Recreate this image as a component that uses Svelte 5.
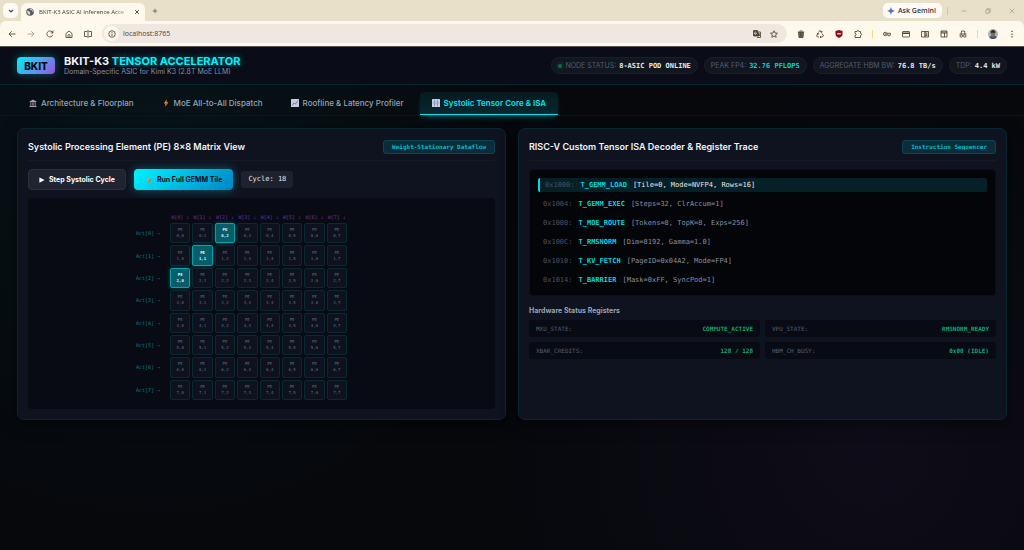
<script lang="ts">
  type Stat = { label: string; value: string; dot?: boolean; accent?: boolean }

  const stats: Stat[] = [
    { label: 'NODE STATUS:', value: '8-ASIC POD ONLINE', dot: true },
    { label: 'PEAK FP4:', value: '32.76 PFLOPS', accent: true },
    { label: 'AGGREGATE HBM BW:', value: '76.8 TB/s' },
    { label: 'TDP:', value: '4.4 kW' }
  ]

  const tabs = [
    { icon: 'bank', label: 'Architecture & Floorplan' },
    { icon: 'bolt', label: 'MoE All-to-All Dispatch' },
    { icon: 'chart', label: 'Roofline & Latency Profiler' },
    { icon: 'grid', label: 'Systolic Tensor Core & ISA' }
  ]

  const isa = [
    { addr: '0x1000:', op: 'T_GEMM_LOAD', args: '[Tile=0, Mode=NVFP4, Rows=16]' },
    { addr: '0x1004:', op: 'T_GEMM_EXEC', args: '[Steps=32, ClrAccum=1]' },
    { addr: '0x1008:', op: 'T_MOE_ROUTE', args: '[Tokens=8, TopK=8, Exps=256]' },
    { addr: '0x100C:', op: 'T_RMSNORM', args: '[Dim=8192, Gamma=1.0]' },
    { addr: '0x1010:', op: 'T_KV_FETCH', args: '[PageID=0x04A2, Mode=FP4]' },
    { addr: '0x1014:', op: 'T_BARRIER', args: '[Mask=0xFF, SyncPod=1]' }
  ]

  const registers = [
    { name: 'MXU_STATE:', value: 'COMPUTE_ACTIVE' },
    { name: 'VPU_STATE:', value: 'RMSNORM_READY' },
    { name: 'XBAR_CREDITS:', value: '128 / 128' },
    { name: 'HBM_CH_BUSY:', value: '0x00 (IDLE)' }
  ]

  const lanes = [0, 1, 2, 3, 4, 5, 6, 7]

  let activeTab = $state(3)
  let cycle = $state(18)
  let url = $state('localhost:8765')

  // the wavefront moves one diagonal per cycle
  let diagonal = $derived(cycle % 16)
  let pc = $derived(cycle % isa.length)
</script>

{#snippet bolt()}
  <svg class="emoji" viewBox="0 0 16 16" aria-hidden="true">
    <path d="M9.5 0.5 4 9h3.6L6 15.5 12.5 6.5H8.8z" fill="#f7a03c" />
    <path d="M7.6 9 6 15.5 12.5 6.5 8.8 6.5z" fill="#e0562b" />
  </svg>
{/snippet}

<div class="chrome">
  <div class="tabstrip">
    <button class="tab-search" aria-label="Search tabs">
      <svg viewBox="0 0 16 16"><path d="M4 6l4 4 4-4" stroke-width="2.4" /></svg>
    </button>
    <div class="browser-tab">
      <svg class="globe" viewBox="0 0 16 16">
        <circle cx="8" cy="8" r="7.5" fill="#50555c" stroke="none" />
        <path d="M2 6c3-1 4 1 6 2s0 4-1 6C4 13 2 10 2 6zM8 1.500c-1 2 1 3 3 3s1 3 3 4c1-3-1-7-6-7z" fill="#d5d6d3" stroke="none" />
      </svg>
      <span class="title">BKIT-K3 ASIC AI Inference Acce</span>
      <button class="bare" aria-label="Close tab">
        <svg viewBox="0 0 16 16"><path d="M3 3l10 10M13 3L3 13" stroke-width="2.6" /></svg>
      </button>
    </div>
    <button class="bare new-tab" aria-label="New tab">
      <svg viewBox="0 0 16 16"><path d="M8 2v12M2 8h12" stroke-width="1.8" /></svg>
    </button>
    <button class="gemini">
      <svg viewBox="0 0 16 16">
        <path d="M8 0C8.600 5 11 7.400 16 8H0C5 7.400 7.400 5 8 0z" fill="#e8523f" stroke="none" />
        <path d="M8 0C7.400 5 5 7.400 0 8c5 .6 7.400 3 8 8z" fill="#35a853" stroke="none" />
        <path d="M8 2c.6 3.500 3 5.400 8 6-5 .6-7.400 3-8 8-.6-4-2-6-4-8 2-1 3.500-3 4-6z" fill="#3b78f0" stroke="none" />
      </svg>
      Ask Gemini
    </button>
    <span class="rule"></span>
    <div class="window-buttons">
      <button class="bare" aria-label="Minimize"><svg viewBox="0 0 16 16"><path d="M2 8h12" /></svg></button>
      <button class="bare" aria-label="Restore">
        <svg viewBox="0 0 16 16"><rect x="2" y="5" width="9" height="9" rx="1" /><path d="M5 5V2h9v9h-3" /></svg>
      </button>
      <button class="bare" aria-label="Close"><svg viewBox="0 0 16 16"><path d="M2 2l12 12M14 2L2 14" /></svg></button>
    </div>
  </div>

  <div class="toolbar">
    <div class="nav">
      <button class="bare" aria-label="Back"><svg viewBox="0 0 16 16"><path d="M15 8H2M7.500 2.500L2 8l5.500 5.500" /></svg></button>
      <button class="bare off" aria-label="Forward"><svg viewBox="0 0 16 16"><path d="M1 8h13M8.500 2.500L14 8l-5.500 5.500" /></svg></button>
      <button class="bare" aria-label="Reload">
        <svg viewBox="0 0 16 16"><path d="M13.500 9.500A6 6 0 1 1 12 3.700L14 5.500M14 1v4.800H9.500" /></svg>
      </button>
      <button class="bare" aria-label="Home">
        <svg viewBox="0 0 16 16"><path d="M2 7l6-5 6 5v8H2zM6 15v-4a2 2 0 0 1 4 0v4" /></svg>
      </button>
      <button class="bare" aria-label="Split view">
        <svg viewBox="0 0 16 16"><path d="M6.500 3H1v10h5.500M9.500 3H15v10H9.500M8 0v16" /></svg>
      </button>
    </div>
    <div class="omnibox">
      <button class="site-info" aria-label="Site information">
        <svg viewBox="0 0 16 16"><circle cx="8" cy="8" r="6.500" /><path d="M8 7v5M8 4v1.500" /></svg>
      </button>
      <input type="text" aria-label="Address" bind:value={url} />
      <button class="bare" aria-label="Translate">
        <svg viewBox="0 0 16 16">
          <path d="M1 1h8l3 11H1z" fill="#4c4632" /><path d="M10 4h5v11H8M10 8h4M12 7v1c0 2-1 3-2 4M11 9l3 3" />
          <path d="M6.500 5a2 2 0 1 0 .5 2H5" stroke="#efe6dd" />
        </svg>
      </button>
      <button class="bare" aria-label="Bookmark">
        <svg viewBox="0 0 16 16"><path d="M8 1.500l2 4.600 5 .4-3.800 3.300 1.200 4.900L8 12l-4.400 2.700 1.200-4.900L1 6.500l5-.4z" /></svg>
      </button>
    </div>
    <div class="extensions">
      <button class="bare" aria-label="Cleaner">
        <svg viewBox="0 0 16 16"><path d="M3 5h10l-1 10H4z" fill="#6f7278" /><path d="M1.500 4h13M5 2h6M6.500 6v8M9.500 6v8" /></svg>
      </button>
      <button class="bare" aria-label="Recycle">
        <svg viewBox="0 0 16 16"><path d="M5 5l3-4 3 4M12 7l3 5-3 2H9M6 14H3l-2-2 3-5M9 4h3V2M10 12l-2 2 2 2M2 7h3v2" /></svg>
      </button>
      <button class="bare" aria-label="Content blocker">
        <svg viewBox="0 0 16 16">
          <path d="M8 0l7 2v6c0 4-3 6-7 8-4-2-7-4-7-8V2z" fill="#8c0d12" stroke="none" />
          <path d="M4.500 7.500h7" stroke="#fff" stroke-width="2.500" />
        </svg>
      </button>
      <button class="bare" aria-label="Extensions">
        <svg viewBox="0 0 16 16"><path d="M2 3h4a2 2 0 0 1 4 0h3v4a2 2 0 0 1 0 4v4H2v-4a2 2 0 0 0 0-4z" /></svg>
      </button>
    </div>
    <span class="rule yellow"></span>
    <div class="panels">
      <button class="bare" aria-label="Passwords">
        <svg viewBox="0 0 16 16"><circle cx="4.500" cy="8" r="3.500" /><circle cx="4.500" cy="8" r=".8" /><path d="M8 6.500h7v3h-1.500v2h-3V9.500H8" /></svg>
      </button>
      <button class="bare" aria-label="Payment methods">
        <svg viewBox="0 0 16 16"><rect x="1" y="3" width="14" height="11" rx="1" /><path d="M1 6.500h14" stroke-width="3" /></svg>
      </button>
      <button class="bare" aria-label="Reading list">
        <svg viewBox="0 0 16 16"><path d="M8 3H1v11h7zM8 3h7v11H8zM10 6h3M10 8.500h3M10 11h3" /></svg>
      </button>
      <button class="bare" aria-label="Layout">
        <svg viewBox="0 0 16 16"><path d="M2 2h12v12H2zM2 6h12M9 6v8M2 4h12" /></svg>
      </button>
      <button class="bare" aria-label="Incognito tools">
        <svg viewBox="0 0 16 16"><path d="M1 8h14M4 8l1-6h6l1 6" /><circle cx="4.500" cy="12" r="2.500" /><circle cx="11.500" cy="12" r="2.500" /></svg>
      </button>
    </div>
    <span class="rule yellow"></span>
    <button class="avatar" aria-label="Profile">
      <svg viewBox="0 0 16 16">
        <circle cx="8" cy="8" r="8" fill="#a9b4b8" stroke="none" />
        <path d="M2 13c2-3 10-3 12 0-3 4-9 4-12 0z" fill="#3f5a74" stroke="none" />
        <ellipse cx="8" cy="7.500" rx="3.500" ry="4.500" fill="#8e6a55" stroke="none" />
        <path d="M4 6c0-6 8-6 8 0z" fill="#2b2624" stroke="none" />
      </svg>
    </button>
    <button class="bare" aria-label="Menu">
      <svg viewBox="0 0 16 16"><path d="M8 1.500v2.500M8 7v2.500M8 12.500v2.500" stroke-width="2.500" /></svg>
    </button>
  </div>
</div>

<div class="app">
  <header>
    <div class="logo">BKIT</div>
    <div class="brand">
      <h1>BKIT-K3 <span>TENSOR ACCELERATOR</span></h1>
      <p>Domain-Specific ASIC for Kimi K3 (2.8T MoE LLM)</p>
    </div>
    <div class="stats">
      {#each stats as stat}
        <div class="pill">
          {#if stat.dot}<i class="dot"></i>{/if}
          <span>{stat.label}</span>
          <strong class:accent={stat.accent}>{stat.value}</strong>
        </div>
      {/each}
    </div>
  </header>

  <nav class="tabs">
    {#each tabs as tab, i}
      <button class:active={activeTab === i} onclick={() => (activeTab = i)}>
        {#if tab.icon === 'bolt'}
          {@render bolt()}
        {:else}
          <svg class="emoji" viewBox="0 0 16 16" aria-hidden="true">
            {#if tab.icon === 'bank'}
              <path d="M8 1L15 5v1.500H1V5zM1 13.500h14V16H1z" fill="#aa9cac" />
              <path d="M2.500 7h2v6h-2zM5.800 7h1.700v6H5.800zM8.600 7h1.700v6H8.600zM11.500 7h2v6h-2z" fill="#8c7f92" />
            {:else if tab.icon === 'chart'}
              <rect width="16" height="16" rx="1" fill="#d5cbe0" />
              <path d="M1 6h14M1 10h14M5 1v14M10 1v14" stroke="#b5abc8" stroke-width=".6" />
              <path d="M2 13l4-5 3 2 5-7" fill="none" stroke="#3d84cd" stroke-width="1.800" />
            {:else}
              <rect width="16" height="16" rx="1" fill="#d3cfe6" />
              <path d="M5 1v14M11 1v14M1 8h14" stroke="#6f96d2" stroke-width="1.500" />
              <path d="M3.500 4.500h3M9.500 4.500h3M3.500 11.500h3M9.500 11.500h3" stroke="#7d8cc4" stroke-width="1.500" />
            {/if}
          </svg>
        {/if}
        {tab.label}
      </button>
    {/each}
  </nav>

  <main>
    <section class="card">
      <div class="card-head">
        <h2>Systolic Processing Element (PE) 8×8 Matrix View</h2>
        <span class="badge">Weight-Stationary Dataflow</span>
      </div>
      <div class="controls">
        <button class="step" onclick={() => (cycle += 1)}>
          <svg viewBox="0 0 16 16" aria-hidden="true"><path d="M1 1l14 7-14 7z" fill="#fff" /></svg>
          Step Systolic Cycle
        </button>
        <button class="run" onclick={() => (cycle += 16)}>
          {@render bolt()}
          Run Full GEMM Tile
        </button>
        <span class="cycle">Cycle: {cycle}</span>
      </div>
      <div class="matrix">
        <div class="pe-grid">
          <span></span>
          {#each lanes as c}
            <span class="weight">W[{c}] ↓</span>
          {/each}
          {#each lanes as r}
            <span class="act">Act[{r}] →</span>
            {#each lanes as c}
              <div class="pe" class:hot={r + c === diagonal}>
                <span>PE</span>
                <span>{r},{c}</span>
              </div>
            {/each}
          {/each}
        </div>
      </div>
    </section>

    <section class="card">
      <div class="card-head">
        <h2>RISC-V Custom Tensor ISA Decoder &amp; Register Trace</h2>
        <span class="badge">Instruction Sequencer</span>
      </div>
      <div class="trace">
        {#each isa as line, i}
          <div class="line" class:current={i === pc}>
            <span class="addr">{line.addr}</span>
            <span class="op">{line.op}</span>
            <span>{line.args}</span>
          </div>
        {/each}
      </div>
      <h3>Hardware Status Registers</h3>
      <div class="registers">
        {#each registers as reg}
          <div class="register">
            <span>{reg.name}</span>
            <strong>{reg.value}</strong>
          </div>
        {/each}
      </div>
    </section>
  </main>
</div>

<style>
  :global(body) {
    margin: 0;
    background: #05070b;
  }

  :global(#app) {
    display: flex;
    flex-direction: column;
    min-height: 100vh;
  }

  * {
    box-sizing: border-box;
  }

  button {
    font: inherit;
    margin: 0;
    cursor: pointer;
  }

  /* browser frame */
  .chrome {
    font-family: 'Open Sans', 'Noto Sans', sans-serif;
    color: #3c3828;
    background: #e8e0c8;
  }

  .chrome svg {
    display: block;
    width: 8px;
    height: 8px;
    fill: none;
    stroke: #4c4632;
    stroke-width: 1.7;
  }

  .chrome .bare {
    padding: 0;
    border: 0;
    background: none;
  }

  .tabstrip {
    display: flex;
    align-items: center;
    height: 21px;
    padding-left: 3px;
  }

  .tab-search {
    display: grid;
    place-items: center;
    width: 15px;
    height: 15px;
    padding: 0;
    border: 0;
    border-radius: 5px;
    background: #fffaf8;
  }

  .browser-tab {
    display: flex;
    align-items: center;
    gap: 5px;
    align-self: flex-end;
    width: 124px;
    height: 18px;
    margin-left: 3px;
    padding: 0 5px;
    border-radius: 6px 6px 0 0;
    background: #fff8ec;
    font-size: 6px;
  }

  .browser-tab .title {
    flex: 1;
    overflow: hidden;
    white-space: nowrap;
    mask-image: linear-gradient(90deg, #000 85%, transparent);
  }

  .browser-tab .bare svg,
  .new-tab svg {
    width: 6px;
    height: 6px;
  }

  .new-tab {
    margin-left: 7px;
  }

  .gemini {
    display: flex;
    align-items: center;
    gap: 3px;
    height: 15px;
    margin-left: auto;
    padding: 0 6px 0 4px;
    border: 0;
    border-radius: 5px;
    background: #fffaf8;
    color: #333;
    font-size: 7px;
    font-weight: 600;
  }

  .rule {
    width: 1px;
    height: 8px;
    margin-left: 5px;
    background: #ccc4ae;
  }

  .rule.yellow {
    margin: 0 10px;
    background: #f6dc76;
  }

  .window-buttons {
    display: flex;
    gap: 18px;
    padding: 0 9px 0 13px;
  }

  .window-buttons svg {
    width: 6px;
    height: 6px;
    stroke: #9b947f;
  }

  .toolbar {
    display: flex;
    align-items: center;
    height: 26px;
    padding: 0 8px;
    border-bottom: 1px solid #56554f;
    border-radius: 6px 6px 0 0;
    background: #fff8ec;
  }

  .nav {
    display: flex;
    gap: 11px;
  }

  .nav .off {
    opacity: 0.5;
  }

  .omnibox {
    display: flex;
    flex: 1;
    align-items: center;
    gap: 9px;
    height: 19px;
    margin: 0 10px;
    padding: 0 9px 0 2px;
    border-radius: 10px;
    background: #efe7e1;
  }

  .site-info {
    display: grid;
    place-items: center;
    width: 15px;
    height: 15px;
    padding: 0;
    border: 0;
    border-radius: 50%;
    background: #fff8ec;
  }

  .omnibox input {
    flex: 1;
    min-width: 0;
    margin-left: -5px;
    padding: 0;
    border: 0;
    outline: 0;
    background: none;
    color: #4a463c;
    font-family: inherit;
    font-size: 7px;
  }

  .extensions,
  .panels {
    display: flex;
    gap: 11px;
  }

  .avatar {
    margin-right: 10px;
    padding: 0;
    border: 0;
    background: none;
  }

  .avatar svg {
    width: 10px;
    height: 10px;
  }

  /* page */
  .app {
    flex: 1;
    font-family: Inter, sans-serif;
    color: #f1f5f9;
    background:
      radial-gradient(circle at 15% 20%, rgba(0, 242, 254, 0.05), transparent 40%),
      radial-gradient(circle at 85% 80%, rgba(155, 81, 224, 0.06), transparent 40%),
      #06080c;
  }

  header {
    display: flex;
    align-items: center;
    gap: 9px;
    height: 38px;
    padding: 0 17px;
    border-bottom: 1px solid #082630;
    background: #0a0d17;
  }

  .logo {
    display: grid;
    place-items: center;
    width: 38px;
    height: 17px;
    border-radius: 4px;
    background: linear-gradient(135deg, #00f2fe, #9b51e0);
    box-shadow: 0 0 8px rgba(0, 242, 254, 0.35);
    color: #05070b;
    font-size: 10px;
    font-weight: 800;
  }

  h1,
  h2,
  h3,
  p {
    margin: 0;
  }

  h1 {
    font-size: 11px;
    font-weight: 700;
    line-height: 13px;
  }

  h1 span {
    color: #00f2fe;
    text-shadow: 0 0 6px rgba(0, 242, 254, 0.5);
  }

  .brand p {
    color: #8290a5;
    font-size: 7px;
    line-height: 8px;
  }

  .stats {
    display: flex;
    gap: 6px;
    margin-left: auto;
  }

  .pill {
    display: flex;
    align-items: center;
    gap: 3px;
    height: 17px;
    padding: 0 6px;
    border: 1px solid #1b1f29;
    border-radius: 9px;
    background: #12161f;
    color: #505e73;
    font-size: 7px;
    white-space: nowrap;
  }

  .pill strong {
    color: #e2e8f0;
    font-family: 'DejaVu Sans Mono', monospace;
  }

  .pill strong.accent {
    color: #00d0dc;
  }

  .dot {
    width: 4px;
    height: 4px;
    border-radius: 50%;
    background: #0b6b4c;
    box-shadow: 0 0 4px #0b6b4c;
  }

  .tabs {
    display: flex;
    gap: 4px;
    padding: 7px 17px 0;
    border-bottom: 1px solid #10141b;
  }

  .tabs button {
    display: flex;
    align-items: center;
    gap: 4px;
    height: 23px;
    padding: 0 12px;
    border: 0;
    border-bottom: 1px solid transparent;
    border-radius: 4px 4px 0 0;
    background: none;
    color: #94a3b8;
    font-size: 8px;
    font-weight: 500;
  }

  .tabs button.active {
    border-color: #00e2ee;
    background: linear-gradient(180deg, #07191f, #06282f);
    box-shadow: 0 4px 6px -3px rgba(0, 242, 254, 0.4);
    color: #00e2ee;
    font-weight: 600;
  }

  .emoji {
    width: 8px;
    height: 8px;
  }

  main {
    display: grid;
    grid-template-columns: 1fr 1fr;
    gap: 12px;
    padding: 12px 17px;
  }

  .card {
    padding: 10px;
    border: 1px solid #092731;
    border-radius: 7px;
    background: #0f131f;
    box-shadow: 0 4px 16px rgba(0, 0, 0, 0.5);
  }

  .card-head {
    display: flex;
    align-items: center;
    justify-content: space-between;
    height: 22px;
    padding-bottom: 6px;
    border-bottom: 1px solid #151a25;
  }

  h2 {
    font-size: 9px;
    font-weight: 600;
  }

  .badge {
    padding: 0 8px;
    border: 1px solid #0a4752;
    border-radius: 3px;
    background: #0b2c38;
    color: #00bcc9;
    font-family: 'DejaVu Sans Mono', monospace;
    font-size: 6px;
    font-weight: 700;
    line-height: 12px;
  }

  .controls {
    display: flex;
    align-items: center;
    gap: 8px;
    margin: 8px 0;
  }

  .controls button {
    display: flex;
    align-items: center;
    gap: 4px;
    height: 21px;
    padding: 0 10px;
    border-radius: 4px;
    font-size: 7px;
    font-weight: 700;
  }

  .step {
    border: 1px solid #2b303a;
    background: #1f2430;
    color: #fff;
  }

  .step svg {
    width: 6px;
    height: 6px;
  }

  .controls .run {
    padding: 0 11px;
    border: 0;
    background: linear-gradient(135deg, #00f2fe, #0284c7);
    box-shadow: 0 0 8px rgba(0, 242, 254, 0.35);
    color: #05121c;
  }

  .cycle {
    padding: 0 7px;
    border-radius: 3px;
    background: #1e222d;
    color: #e2e8f0;
    font-family: 'DejaVu Sans Mono', monospace;
    font-size: 7px;
    line-height: 17px;
  }

  .matrix {
    display: flex;
    justify-content: center;
    padding: 15px 0 9px;
    border-radius: 4px;
    background: #080b13;
  }

  .pe-grid {
    display: grid;
    grid-template-columns: 32px repeat(8, 1fr);
    gap: 2px;
    width: 211px;
    margin-right: 40px;
    font-family: 'DejaVu Sans Mono', monospace;
    font-size: 5px;
    line-height: 8px;
  }

  .weight {
    color: #4f2580;
    font-weight: 700;
    text-align: center;
    white-space: nowrap;
  }

  .act {
    align-self: center;
    color: #05808b;
    white-space: nowrap;
  }

  .pe {
    display: flex;
    flex-direction: column;
    align-items: center;
    justify-content: center;
    aspect-ratio: 1;
    border: 1px solid #092a34;
    border-radius: 2px;
    background: #0e121e;
    color: #667083;
    font-size: 4px;
    line-height: 6px;
  }

  .pe.hot {
    border-color: #02a3af;
    background: #075d68;
    box-shadow: 0 0 4px rgba(0, 242, 254, 0.3);
    color: #e6f7f8;
    font-weight: 700;
  }

  .trace {
    display: flex;
    flex-direction: column;
    gap: 5px;
    margin-top: 8px;
    padding: 8px;
    border: 1px solid #0b0e16;
    border-radius: 4px;
    background: #040508;
    color: #8490a5;
    font-family: 'DejaVu Sans Mono', monospace;
    font-size: 7px;
    line-height: 14px;
  }

  .line {
    display: flex;
    gap: 6px;
    padding: 0 5px;
    border-radius: 2px;
  }

  .line.current {
    border-left: 2px solid #00d8e4;
    background: #062027;
    color: #e2e8f0;
  }

  .addr {
    color: #475164;
  }

  .op {
    color: #00d4e0;
    font-weight: 700;
  }

  h3 {
    margin-top: 10px;
    color: #94a3b8;
    font-size: 7px;
    font-weight: 700;
    line-height: 10px;
  }

  .registers {
    display: grid;
    grid-template-columns: 1fr 1fr;
    gap: 5px;
    margin-top: 4px;
  }

  .register {
    display: flex;
    justify-content: space-between;
    padding: 0 7px;
    border-radius: 3px;
    background: #080b13;
    color: #526074;
    font-family: 'DejaVu Sans Mono', monospace;
    font-size: 6px;
    line-height: 17px;
  }

  .register strong {
    color: #0ca873;
  }
</style>
